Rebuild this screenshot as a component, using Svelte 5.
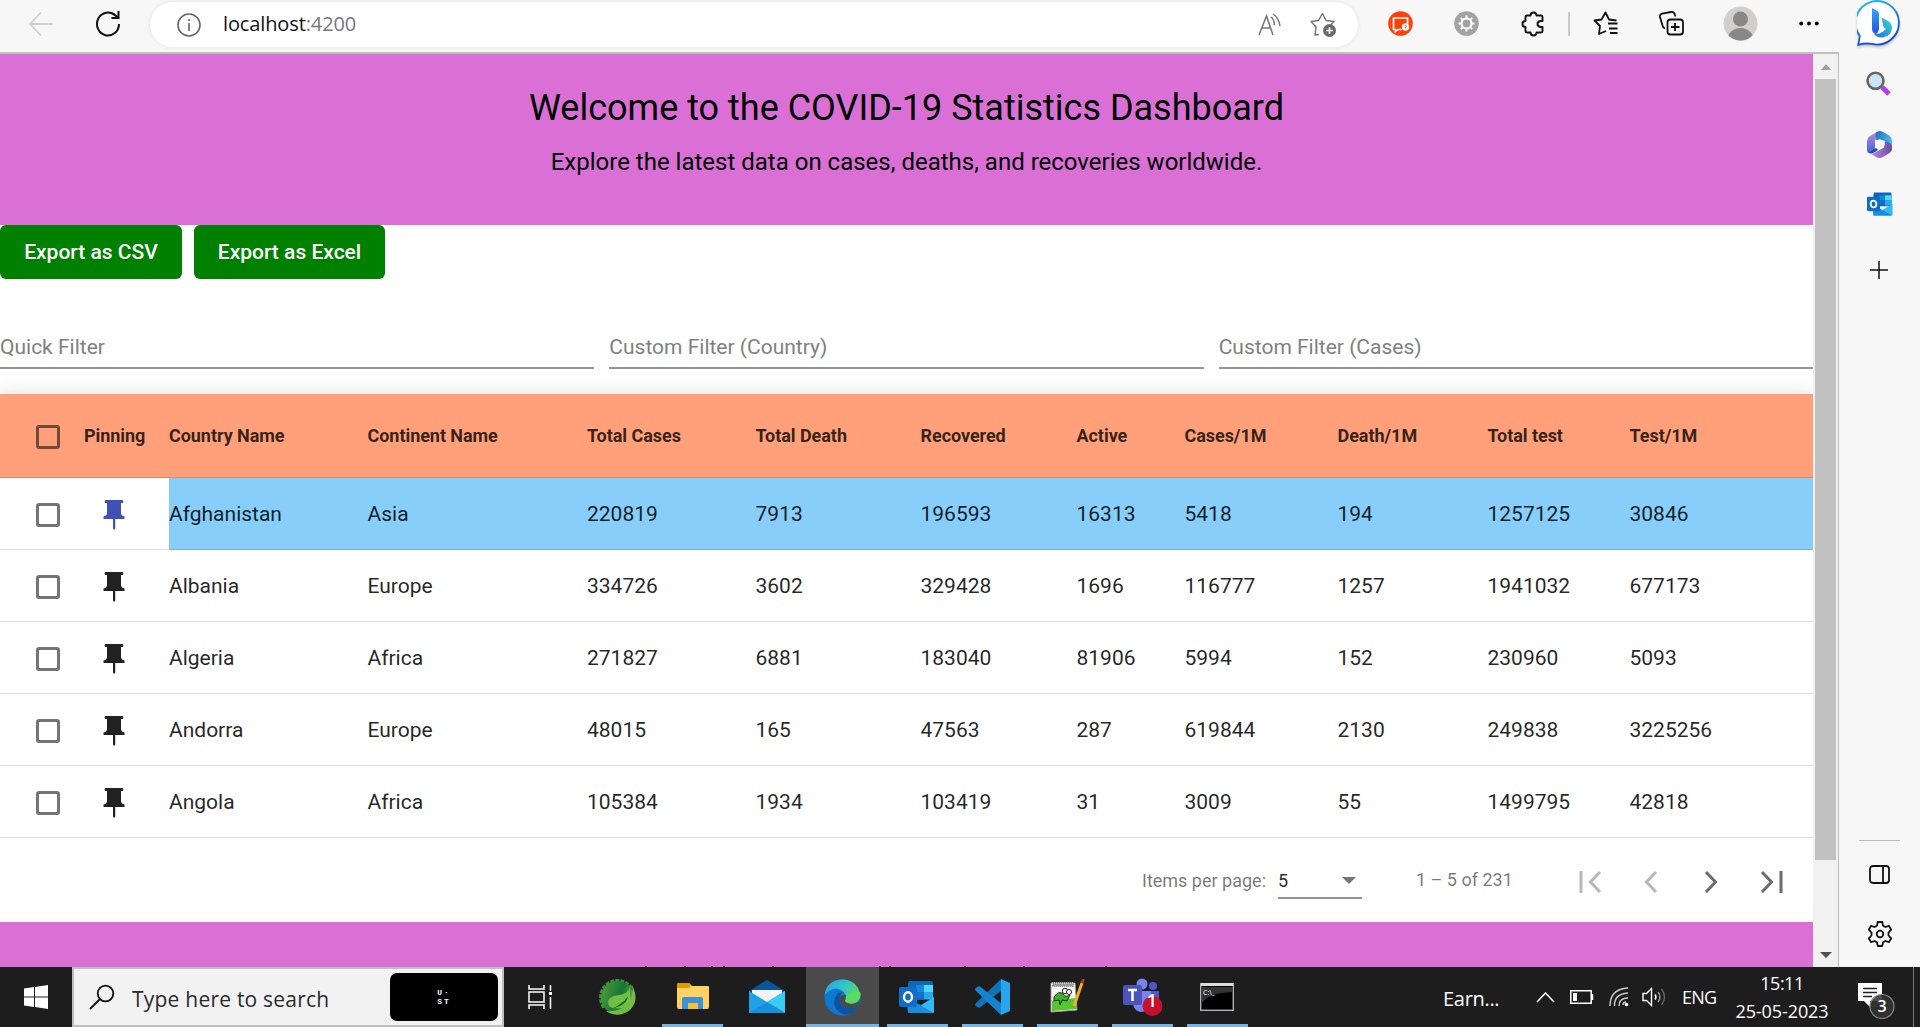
<script>
  const columns = ['Country Name', 'Continent Name', 'Total Cases', 'Total Death', 'Recovered', 'Active', 'Cases/1M', 'Death/1M', 'Total test', 'Test/1M'];
  const rows = [
    ['Afghanistan', 'Asia', 220819, 7913, 196593, 16313, 5418, 194, 1257125, 30846],
    ['Albania', 'Europe', 334726, 3602, 329428, 1696, 116777, 1257, 1941032, 677173],
    ['Algeria', 'Africa', 271827, 6881, 183040, 81906, 5994, 152, 230960, 5093],
    ['Andorra', 'Europe', 48015, 165, 47563, 287, 619844, 2130, 249838, 3225256],
    ['Angola', 'Africa', 105384, 1934, 103419, 31, 3009, 55, 1499795, 42818]
  ];
  let pinned = $state(0);
  const filters = ['Quick Filter', 'Custom Filter (Country)', 'Custom Filter (Cases)'];
  const gearTeeth = [0, 45, 90, 135, 180, 225, 270, 315];
  const springTeeth = Array.from({ length: 11 }, (_, i) => 172 + i * 17);
  const footerTicks = [645, 684, 711, 723, 772, 879, 889, 964, 1023, 1105];
</script>

{#snippet outlook(size)}
  <svg width={size} height={size} viewBox="0 0 36 36">
    <path d="M10 2h22a2 2 0 0 1 2 2v17H9V4z" fill="#1066b5" />
    <path d="M17 6h8v7h-8z" fill="#1a86d9" /><path d="M25 6h9v7h-9z" fill="#50d9ff" />
    <path d="M17 13h8v6h-8z" fill="#1272c4" /><path d="M25 13h9v7h-9z" fill="#28a8ea" />
    <path d="M8 19l14 8 13-9v15a1 1 0 0 1-1 1H9z" fill="#1490df" />
    <path d="M35 18v15l-1 1L16 23l6 3z" fill="#35b8f1" /><path d="M8 19l26 15H9z" fill="#1a8be0" />
    <rect x="0" y="8" width="18" height="20" rx="2" fill="#0f6cc9" />
    <ellipse cx="9" cy="18" rx="4" ry="4.7" fill="none" stroke="#fff" stroke-width="2.4" />
  </svg>
{/snippet}

<div class="screen">
  <div class="browser">
    <div class="window">
      <div class="toolbar">
        <div class="cell back">
          <svg width="24" height="28" viewBox="0 0 24 28" fill="none" stroke="#cfcfcf" stroke-width="1.8"><path d="M23.500 14H1M12 2.500L1 14l11 11.500" /></svg>
        </div>
        <div class="cell refresh">
          <svg width="26" height="28" viewBox="0 0 26 28" fill="none" stroke="#111" stroke-width="2"><path d="M24 14a11 11.500 0 1 1-3.600-8.500L23.500 8M23.500 1v7h-7" /></svg>
        </div>
        <div class="address">
          <svg class="info" width="24" height="24" viewBox="0 0 24 24" fill="none" stroke="#666" stroke-width="1.600"><circle cx="12" cy="12" r="11" /><path d="M12 10v8M12 6v2" /></svg>
          <span class="url">localhost<span>:4200</span></span>
          <svg class="read" width="24" height="24" viewBox="0 0 24 24" fill="none" stroke="#757575" stroke-width="1.500"><path d="M1 22L8.500 3 15 22M3.500 15h9.500M13 4q3 2 3.500 8M15 1q6 4 7 12" /></svg>
          <svg class="star" width="27" height="25" viewBox="0 0 27 25"><path d="M9 22.500L5 23l1-8-5-5.500 7.500-1L12.500 1.500l3.500 7 8 1-3 3" fill="none" stroke="#757575" stroke-width="1.500" stroke-linejoin="round" /><circle cx="19.500" cy="18.500" r="6.500" fill="#6b6b6b" /><path d="M16 18.500h7M19.500 15v7" stroke="#fff" stroke-width="1.600" /></svg>
        </div>
        <div class="cell">
          <svg width="25" height="25" viewBox="0 0 25 25"><circle cx="12.500" cy="12.500" r="12.300" fill="#ff4107" /><path d="M14 18.500h-4l-2.500 2v-2h-2V7h14v6" fill="none" stroke="#fff" stroke-width="1.700" /><circle cx="17.500" cy="16" r="3.700" fill="#fff" /><path d="M16.500 15q1-1.500 2 0l-1 1.300v1" fill="none" stroke="#ff4107" /></svg>
        </div>
        <div class="cell">
          <svg width="25" height="25" viewBox="0 0 25 25"><circle cx="12.500" cy="12.500" r="12.300" fill="#a2a2a2" /><circle cx="12.500" cy="12.500" r="5" fill="none" stroke="#fff" stroke-width="2.200" />{#each gearTeeth as a}<path d="M12.500 4.500v3" stroke="#fff" stroke-width="2" transform="rotate({a} 12.500 12.500)" />{/each}</svg>
        </div>
        <div class="cell">
          <svg width="24" height="26" viewBox="0 0 24 26" fill="none" stroke="#111" stroke-width="1.900" stroke-linejoin="round"><path d="M6 4.500h3.500Q9.500 1.500 12.500 1.500t3 3H20q1.500 0 1.500 1.500v4h-2q-3 .5-3 3t3 3h2v4q0 1.500-1.500 1.500h-4.500q0 3-3 3t-3-3H6q-1.500 0-1.500-1.500V16q-3 0-3-3t3-3V6q0-1.500 1.500-1.500z" /></svg>
        </div>
        <div class="cell"><i class="divider"></i></div>
        <div class="cell">
          <svg width="25" height="25" viewBox="0 0 25 25" fill="none" stroke="#111" stroke-width="1.800" stroke-linejoin="round"><path d="M13 20l-7 3 1-8-5.500-5.500 7-1L12.500 1.500l3.500 7 7.500 1M15 12.500h9.500M16 17.500h8.500M17 22h7.500" /></svg>
        </div>
        <div class="cell">
          <svg width="25" height="25" viewBox="0 0 25 25" fill="none" stroke="#111" stroke-width="1.800"><rect x="8.500" y="8.500" width="15.500" height="15" rx="3" /><path d="M16 12v8M12 16h8.500M6 17.500q-2-.5-2.500-3L1 6q-.5-2.500 2-3.300L12 1q3-.5 4 3l.5 1.500" /></svg>
        </div>
        <div class="cell">
          <svg width="35" height="35" viewBox="0 0 35 35"><defs><clipPath id="avatar"><circle cx="17.500" cy="17.500" r="17" /></clipPath></defs><circle cx="17.500" cy="17.500" r="17" fill="#d1cfcd" /><g clip-path="url(#avatar)" fill="#8a8785"><circle cx="17.500" cy="13" r="7.500" /><ellipse cx="17.500" cy="34" rx="13" ry="12" /></g></svg>
        </div>
        <div class="cell">
          <svg width="20" height="5" viewBox="0 0 20 5"><circle cx="2.200" cy="2.500" r="1.900" /><circle cx="10" cy="2.500" r="1.900" /><circle cx="17.800" cy="2.500" r="1.900" /></svg>
        </div>
      </div>

      <div class="viewport">
        <main class="page">
          <header>
            <h1>Welcome to the COVID-19 Statistics Dashboard</h1>
            <p>Explore the latest data on cases, deaths, and recoveries worldwide.</p>
          </header>
          <div class="exports">
            <button class="csv">Export as CSV</button>
            <button class="excel">Export as Excel</button>
          </div>
          <div class="filters">
            {#each filters as f}<div class="filter"><span>{f}</span></div>{/each}
          </div>
          <section class="grid">
            <div class="row head">
              <div class="check"><i class="box"></i></div>
              <div>Pinning</div>
              {#each columns as c}<div>{c}</div>{/each}
            </div>
            {#each rows as r, i}
              <div class="row" class:pinned={pinned === i}>
                <div class="check"><i class="box"></i></div>
                <div class="pincell">
                  <!-- svelte-ignore a11y_click_events_have_key_events, a11y_no_static_element_interactions -->
                  <svg onclick={() => (pinned = i)} width="22" height="30" viewBox="0 0 22 30"><path d="M2.500 0h17q.8 0 .8 1.500T19.500 3H18v10q0 2.500 3.500 3.500v2.500H12.200v9.500L11.200 30l-1.200-1.500V19H.5v-2.500Q4 15.500 4 13V3H2.500q-.8 0-.8-1.500T2.500 0z" fill="currentColor" /></svg>
                </div>
                {#each r as v}<div class="data">{v}</div>{/each}
              </div>
            {/each}
          </section>
          <div class="paginator">
            <span class="label">Items per page:</span>
            <div class="select"><span>5</span><i></i></div>
            <span class="range">1 – 5 of 231</span>
            <div class="nav">
              <svg class="off" viewBox="0 0 24 24"><path d="M2 1v22M21 2L11.500 12 21 22" /></svg>
              <svg class="off" viewBox="0 0 24 24"><path d="M17 2L7.500 12 17 22" /></svg>
              <svg viewBox="0 0 24 24"><path d="M7 2l9.500 10L7 22" /></svg>
              <svg viewBox="0 0 24 24"><path d="M22 1v22M3 2l9.500 10L3 22" /></svg>
            </div>
          </div>
          <footer>
            <svg width="1813" height="2" viewBox="0 0 1813 2">{#each footerTicks as x}<path d="M{x} 1.500h2" stroke="#2b1030" />{/each}</svg>
          </footer>
        </main>
        <div class="scrollbar">
          <i class="up"></i>
          <div class="thumb"></div>
          <i class="down"></i>
        </div>
      </div>
    </div>

    <aside>
      <div class="bing">
        <svg width="46" height="48" viewBox="0 0 46 48">
          <defs>
            <linearGradient id="ring" x1="0" y1="0" x2=".4" y2="1"><stop offset="0" stop-color="#24c4ee" /><stop offset="1" stop-color="#1b48d8" /></linearGradient>
            <linearGradient id="stem" x1="0" y1="0" x2="0" y2="1"><stop offset="0" stop-color="#35a9f5" /><stop offset="1" stop-color="#2152dd" /></linearGradient>
            <linearGradient id="bowl" x1="0" y1="1" x2="1" y2="0"><stop offset="0" stop-color="#2169e2" /><stop offset="1" stop-color="#34dfd0" /></linearGradient>
          </defs>
          <path d="M1.300 44.800l1.500-9A21.700 21.700 0 1 1 15 43.900q-7-1-13.700.9z" fill="#fff" stroke="url(#ring)" stroke-width="1.900" />
          <path d="M15 8l5.500 3q1.500 1 1.500 2.500V29q-1.500 6-4.500 4.500Q15 32 15 29z" fill="url(#stem)" />
          <path d="M24.500 17.500l6.500 3.500q4 2.500 4 6.500 0 8-8.500 9.800-6 1-9.500-3.300 5 .5 9-2.500l3-2.500-2.500-2z" fill="url(#bowl)" />
        </svg>
      </div>
      <div class="side s1">
        <svg width="25" height="25" viewBox="0 0 25 25"><path d="M16 16l7 7" stroke="#b33bf3" stroke-width="5" /><circle cx="9.500" cy="9.800" r="8" fill="#c8e8fa" stroke="#666" stroke-width="2.600" /></svg>
      </div>
      <div class="side s2">
        <svg width="25" height="27" viewBox="0 0 25 27">
          <defs>
            <linearGradient id="mTop" x1="0" y1="0" x2="1" y2=".6"><stop offset="0" stop-color="#2f62b8" /><stop offset="1" stop-color="#3fc4f4" /></linearGradient>
            <linearGradient id="mLeft" x1="0" y1="0" x2="0" y2="1"><stop offset="0" stop-color="#b48ae8" /><stop offset="1" stop-color="#3d63d4" /></linearGradient>
            <linearGradient id="mBase" x1="0" y1="0" x2="1" y2="0"><stop offset="0" stop-color="#b98be6" /><stop offset="1" stop-color="#6e4a9e" /></linearGradient>
          </defs>
          <path d="M10 1L3 5Q0 7 0 10v9q0 3 3 3.500 2 0 5-2V8z" fill="url(#mLeft)" />
          <path d="M8.500 9V3q0-2 4-3 2 0 4 1.200l6 3.500Q25 6.500 25 10v6l-7-6-5-1.500z" fill="url(#mTop)" />
          <path d="M25 15v3q0 2.500-2.500 4l-6.500 4q-3.500 2-7 0L3.500 22.500Q6 23 9 21l8-4.500L18 10q6 1 7 5z" fill="url(#mBase)" />
          <path d="M2 22q3 1 6-1l3-2-2-2-5 3z" fill="#2450a4" />
          <circle cx="12.700" cy="13.500" r="4.700" fill="#f7f7f7" />
        </svg>
      </div>
      <div class="side s3">{@render outlook(26)}</div>
      <div class="side s4"><svg width="18" height="18" viewBox="0 0 18 18"><path d="M9 0v18M0 9h18" stroke="#111" stroke-width="1.500" /></svg></div>
      <i class="rule"></i>
      <div class="side s5"><svg width="21" height="19" viewBox="0 0 21 19" fill="none" stroke="#111" stroke-width="1.800"><rect x="1" y="1" width="19" height="17" rx="3" /><path d="M14 1v17" /></svg></div>
      <div class="side s6">
        <svg width="26" height="26" viewBox="0 0 26 26" fill="none" stroke="#111" stroke-width="1.800" stroke-linejoin="round"><circle cx="13" cy="13" r="3.300" /><path d="M10.800 1h4.400l.9 3.700 2.300 1.300 3.600-1.100 2.200 3.800L21.500 11.500v3l2.700 2.800-2.200 3.800-3.600-1.100-2.300 1.300-.9 3.700h-4.400l-.9-3.700L7.600 20 4 21.100l-2.200-3.800 2.700-2.800v-3L1.800 8.700 4 4.900 7.600 6l2.300-1.300z" /></svg>
      </div>
    </aside>
  </div>

  <div class="taskbar">
    <div class="tile start"><svg width="24" height="24" viewBox="0 0 24 24" fill="#fff"><path d="M0 3.500l10-1.400v9.300H0zM11 1.900L24 0v11.400H11zM0 12.500h10v9.400L0 20.500zM11 12.500h13V24l-13-1.900z" /></svg></div>
    <div class="search">
      <svg width="26" height="26" viewBox="0 0 26 26" fill="none" stroke="#111" stroke-width="1.800"><circle cx="16.500" cy="9.500" r="7.800" /><path d="M11 15L1 25" /></svg>
      <span>Type here to search</span>
      <div class="ust"><b>U·</b><b>ST</b></div>
    </div>
    <div class="tile view"><svg width="24" height="24" viewBox="0 0 24 24" fill="none" stroke="#fff" stroke-width="1.500"><path d="M1 0v4h15V0M1 24v-4h15v4M1 7h15v10H1zM22.500 0v6M22.500 12v12" /><path d="M21 7h3v3h-3z" fill="#fff" stroke="none" /></svg></div>
    <div class="tile spring">
      <svg width="37" height="37" viewBox="0 0 37 37">
        <defs><linearGradient id="leafbg" x1="0" y1=".3" x2="1" y2=".6"><stop offset="0" stop-color="#4b9b38" /><stop offset=".6" stop-color="#14733a" /><stop offset="1" stop-color="#6db83f" /></linearGradient></defs>
        {#each springTeeth as a}<path d="M34 16h3v4h-3z" fill="#3c8f39" transform="rotate({a - 20} 18.500 18.500)" />{/each}
        <circle cx="18.500" cy="18.500" r="16.500" fill="url(#leafbg)" />
        <path d="M33 6q8 15-2 25-12 9-24 1 12 1 20-5 8-7 6-21z" fill="#72bd44" /><path d="M31 16q2 8-5 12-8 3-15 0-4-5 0-9 4-3 9-3 8-1 11-7z" fill="#72bd44" /><path d="M6 30q10 0 15-5 5-3 8-8-1 7-8 10-8 4-15 3z" fill="#0b6b34" />
      </svg>
    </div>
    <div class="tile app first">
      <svg width="34" height="28" viewBox="0 0 34 28"><path d="M1 2q0-2 2-2h10l3 3h16q1 0 1 1v20q0 2-2 2H3q-2 0-2-2z" fill="#ffd261" /><path d="M1 5V2q0-2 2-2h10l2 2-2 3z" fill="#dd9b00" /><path d="M6 26V16q0-2 2-2h17q2 0 2 2v10h-5v-6H12v6z" fill="#3c91d8" /><path d="M12 20h10v6H12z" fill="#f7c035" /></svg>
    </div>
    <div class="tile mail">
      <svg width="36" height="34" viewBox="0 0 36 34"><path d="M0 11L18 0l18 11v4H0z" fill="#0b559f" /><path d="M3 10h30v7L18 24 3 17z" fill="#f3f3f4" /><path d="M0 11l18 11 18-11v22H0z" fill="#20a0e6" /><path d="M36 11v22L18 22z" fill="#39caf5" /><path d="M0 33h36L18 22z" fill="#168fdc" /></svg>
    </div>
    <div class="tile edge">
      <svg width="37" height="37" viewBox="0 0 37 37">
        <defs><linearGradient id="wave" x1="0" y1=".2" x2="1" y2=".6"><stop offset="0" stop-color="#2ea5df" /><stop offset=".5" stop-color="#32c4cb" /><stop offset="1" stop-color="#62db55" /></linearGradient></defs>
        <circle cx="18.500" cy="18.500" r="18" fill="#0b79cf" />
        <path d="M.6 16Q3 .5 18.500.5 29 .5 34 9q4 9-1 14-5 3-11 .5-2-1 0-4 1-7-9-10Q6 9 .6 16z" fill="url(#wave)" />
        <path d="M13 15Q7 24 13 31q5 5 11 4.500 7-2 10-8-8 3-14 0-6-4-4-10 1-3 3-4-4-1-6 1.500z" fill="#1053a3" />
        <path d="M22 19q-2 4 1 5 6 2 10-.5L37 22l-3 5.500q-8 3-14 0-6-4-3.500-10 2-3 5.500-1z" fill="#4a4a4a" /><path d="M21.500 18q1 2-.5 4 5 4.500 13 0 4-5 2-9-4-2-14.500 5z" fill="#5dda60" />
      </svg>
    </div>
    <div class="tile app a2">{@render outlook(36)}</div>
    <div class="tile app">
      <svg width="36" height="36" viewBox="0 0 36 36"><path d="M27 0L2 24q-2 2 0 3l2 1.500q1 .5 2 0L28 11z" fill="#1172b8" /><path d="M27 36L2 12q-2-2 0-3l2-1.500q1-.5 2 0L28 25z" fill="#1683cf" /><path d="M27 0l9 4v28l-9 4z" fill="#27a5f1" /></svg>
    </div>
    <div class="tile app">
      <svg width="36" height="36" viewBox="0 0 36 36"><path d="M2 4h24l2 27L2 33z" fill="#f7f7f3" stroke="#999" /><path d="M3 4h22v4H3z" fill="#999" stroke="#fff" stroke-dasharray="1 1" /><path d="M3 22l24-3 1 11L3 32z" fill="#58c52e" /><path d="M5 18q5-7 9-3 3 4 7 1l-3 6-5-1-2 5-1-5-5 1z" fill="#49a831" stroke="#143b14" /><circle cx="16" cy="12" r="2.700" fill="#fff" stroke="#222" /><circle cx="20" cy="13" r="2.500" fill="#fff" stroke="#222" /><path d="M33 4l-8 23" stroke="#f3ae22" stroke-width="3" /><path d="M34.500 0L33 4" stroke="#a63b35" stroke-width="3" /></svg>
    </div>
    <div class="tile app teams">
      <svg width="40" height="38" viewBox="0 0 40 38"><circle cx="19" cy="6" r="5.500" fill="#7b83eb" /><circle cx="30" cy="8" r="4" fill="#5059c9" /><path d="M25 13h11v10q-2 6-8 5z" fill="#5059c9" /><path d="M10 13h18v12q-1 9-10 9-7-1-8-8z" fill="#7b83eb" /><rect x="0" y="7" width="19" height="20" rx="2" fill="#4b53bc" /><path d="M5 12h9M9.500 12v11" stroke="#fff" stroke-width="2.500" /><circle cx="29.500" cy="28" r="10" fill="#c8102e" /></svg>
      <b>1</b>
    </div>
    <div class="tile app">
      <svg width="34" height="28" viewBox="0 0 34 28"><rect x=".7" y=".7" width="32.600" height="26.600" fill="#000" stroke="#adb2b8" stroke-width="1.400" /><path d="M1 0h32v3H1z" fill="#d7dce1" /><path d="M2 4h30v5Q8 10 2 20z" fill="#333" /><text x="3" y="12" fill="#fff" font-size="7">C:\_</text></svg>
    </div>
    <div class="tray">
      <span class="earn">Earn...</span>
      <svg class="chev" width="19" height="11" viewBox="0 0 19 11" fill="none" stroke="#fff" stroke-width="1.500"><path d="M1 10l8.500-9L18 10" /></svg>
      <svg class="batt" width="24" height="14" viewBox="0 0 24 14"><path d="M.8.8h20.400v12.400H.8zM22.500 4v6" fill="none" stroke="#fff" stroke-width="1.500" /><path d="M3 3h4v8H3z" fill="#fff" /></svg>
      <svg class="wifi" width="20" height="20" viewBox="0 0 20 20" fill="none" stroke="#ccc" stroke-width="1.400"><path d="M1 19Q1 2 19 1M5.500 19Q5 7 19 6M10 19Q10 11 19 11" /><path d="M14 18q0-3 3-3" /><circle cx="17.500" cy="17.500" r="1.800" fill="#fff" stroke="none" /></svg>
      <svg class="vol" width="24" height="20" viewBox="0 0 24 20" fill="none" stroke="#fff" stroke-width="1.400"><path d="M1 6.500h3.500L9.500 1.500v17l-5-5H1z" /><path d="M13 7.500q2 2.500 0 5" /><path d="M16 5q4 5 0 10" stroke="#999" /><path d="M19.500 2q6 8 0 16" stroke="#666" /></svg>
      <span class="eng">ENG</span>
      <div class="clock"><span class="time">15:11</span><span class="date">25-05-2023</span></div>
      <div class="notice">
        <svg width="37" height="38" viewBox="0 0 37 38"><path d="M0 2h24v18H12v6l-6-6H0z" fill="#fff" /><path d="M5 7.500h14M5 11.500h14M5 15.500h9" stroke="#222" stroke-width="1.300" /><circle cx="24" cy="25.500" r="12" fill="#333" fill-opacity=".88" stroke="#888" stroke-width="1.200" /></svg>
        <b>3</b>
      </div>
      <i class="peek"></i>
    </div>
  </div>
</div>

<style>
  :global(body) { margin: 0; overflow: hidden; background: #fff; }
  .screen { width: 1920px; height: 1027px; display: grid; grid-template-rows: 967px 60px; overflow: hidden; font-family: Roboto, sans-serif; }
  .screen :global(svg) { display: block; flex: none; }
  .browser { display: grid; grid-template-columns: 1839px 81px; background: #f7f7f7; min-height: 0; }
  .window { display: grid; grid-template-rows: 52px 915px; grid-template-columns: 1839px; min-width: 0; }
  .toolbar { display: grid; grid-template-columns: 82px 52px 1241px 50px 82px 52px 20px 52px 80px 58px 80px; align-items: center; padding-bottom: 6px; height: 46px; }
  .cell { display: flex; justify-content: center; align-items: center; }
  .divider { width: 2px; height: 24px; background: #ccc; }
  .address { display: flex; align-items: center; height: 45px; margin: 2px 17px 0 16px; padding-left: 27px; border-radius: 23px; background: #fff; box-shadow: 0 0 5px rgba(0, 0, 0, .09); }
  .url { margin-left: 22px; padding-bottom: 2px; font: 20px 'Open Sans', sans-serif; letter-spacing: -.12px; color: #111; }
  .url span { color: #777; }
  .read { margin-left: auto; }
  .star { margin: 0 21px 0 28px; }
  .viewport { border-top: 2px solid #c0c0c0; border-right: 1px solid #bdbdbd; display: grid; grid-template-columns: 1813px 25px; overflow: hidden; }
  .page { height: 913px; overflow: hidden; background: #fff; color: rgba(0, 0, 0, .87); }
  header { height: 171px; box-sizing: border-box; padding-top: 30px; background: #da70d6; color: #000; text-align: center; }
  h1 { margin: 0; font-size: 36px; line-height: 48px; font-weight: 400; }
  p { margin: 12px 0 0; font-size: 24px; line-height: 36px; }
  .exports { display: flex; gap: 12px; height: 54px; }
  button { padding: 0; border: 0; border-radius: 6px; background: #008000; color: #fff; font: 500 21px Roboto, sans-serif; }
  .csv { width: 182px; }
  .excel { width: 191px; }
  .filters { display: grid; grid-template-columns: repeat(3, 1fr); gap: 15px; padding-top: 41px; height: 74px; }
  .filter { padding-top: 4px; border-bottom: 2px solid #949494; font-size: 21px; line-height: 46px; height: 43px; color: #808080; }
  .grid { position: relative; box-shadow: 0 7px 8px -4px rgba(0, 0, 0, .2), 0 12px 15px 1px rgba(0, 0, 0, .14), 0 4px 21px 3px rgba(0, 0, 0, .12); }
  .row { display: grid; grid-template-columns: 84px 85px 198.500px 219.500px 168.500px 165px 156px 108px 153px 150px 142px 1fr; height: 72px; box-sizing: border-box; background: #fff; font-size: 21px; }
  .row > div { display: flex; align-items: center; border-bottom: 1px solid rgba(0, 0, 0, .12); white-space: nowrap; }
  .head { height: 84px; background: #ffa07a; font-size: 18px; font-weight: 700; letter-spacing: -.05px; color: rgba(0, 0, 0, .8); }
  .check { padding-left: 36px; }
  .box { width: 18px; height: 18px; margin-top: 3px; border: 3px solid rgba(0, 0, 0, .54); border-radius: 3px; }
  .row > .pincell { padding: 2px 0 0 19px; color: #212121; }
  .pinned > .pincell { color: #3f51b5; }
  .pinned .data { background: #87cefa; }
  .paginator { position: relative; display: flex; align-items: center; box-sizing: border-box; height: 84px; padding-left: 1142px; background: #fff; color: rgba(0, 0, 0, .54); font-size: 18px; }
  .label { width: 136px; padding-top: 1px; white-space: nowrap; }
  .select { display: flex; justify-content: space-between; align-items: center; box-sizing: border-box; width: 84px; height: 38px; padding-right: 6px; border-bottom: 2px solid #949494; color: rgba(0, 0, 0, .87); padding-top: 3px; }
  .select i { border: 7px solid transparent; border-top-color: #757575; border-bottom: 0; }
  .range { width: 163px; margin-left: 54px; padding-bottom: 2px; }
  .nav { display: flex; gap: 36px; padding-top: 3px; }
  .nav svg { width: 24px; height: 24px; fill: none; stroke: #6b6b6b; stroke-width: 3; }
  .nav .off { stroke: #b8b8b8; }
  footer { display: flex; align-items: flex-end; height: 45px; background: #da70d6; position: relative; }
  .scrollbar { display: flex; flex-direction: column; align-items: center; background: #f1f1f1; }
  .up { margin-top: 10px; border: 5.500px solid transparent; border-top: 0; border-bottom: 6px solid #a0a0a0; }
  .thumb { width: 21px; height: 781px; margin-top: 9px; background: #c1c1c1; }
  .down { margin-top: 92px; border: 6px solid transparent; border-bottom: 0; border-top: 6px solid #505050; }
  aside { display: flex; flex-direction: column; align-items: center; }
  .bing { height: 48px; filter: drop-shadow(0 2px 1px rgba(0, 0, 0, .2)); }
  .side { height: 60px; display: flex; align-items: center; }
  .s1 { margin-top: 5px; margin-left: -3px; }
  .s2 { margin-top: 1px; }
  .s4 { margin-top: 6px; margin-left: -2px; }
  .rule { width: 41px; height: 1px; margin-top: 540px; background: #bbb; }
  .s5 { margin-top: 3px; }
  .taskbar { display: flex; background: #1d1d1d; color: #fff; font-family: 'Open Sans', sans-serif; }
  .tile { display: flex; justify-content: center; align-items: center; box-sizing: border-box; flex: none; height: 60px; position: relative; }
  .start { width: 72px; }
  .search { display: flex; align-items: center; box-sizing: border-box; width: 432px; border: 2px solid #bfbfbf; background: #f2f2f2; padding: 0 4px 0 15px; color: #2b2b2b; }
  .search span { margin: 4px 0 0 17px; font-size: 21px; letter-spacing: .22px; }
  .ust { display: flex; flex-direction: column; align-items: center; justify-content: center; width: 108px; height: 48px; margin-left: auto; border-radius: 7px; background: #000; color: #fff; font: 8px/9px 'Liberation Mono', monospace; letter-spacing: 2px; }
  .view { width: 73px; padding-right: 1px; }
  .spring { width: 80px; }
  .app { width: 61px; margin-right: 14px; padding-right: 2px; border-bottom: 3px solid #70b5ec; border-top: 3px solid transparent; }
  .first { margin-left: 5px; padding-right: 0; }
  .mail { width: 69px; padding-right: 9px; }
  .edge { width: 73px; background: #4a4a4a; border-bottom: 3px solid #70b5ec; border-top: 3px solid #4a4a4a; }
  .a2 { margin-left: 8px; }
  .teams b { position: absolute; left: 30px; top: 15px; width: 20px; text-align: center; font-size: 18px; font-weight: 600; left: 29px; top: 18px; }
  .teams b { left: 29px; }
  .teams { padding-right: 0; }
  .teams b { left: 30px; }
  .tray { display: flex; align-items: center; margin-left: 181px; flex: 1; }
  .earn { width: 93px; font-size: 20px; letter-spacing: -.3px; padding-top: 2px; }
  .chev { margin-right: 15px; }
  .batt { margin-right: 15px; }
  .wifi { margin-right: 13px; }
  .vol { margin-right: 16px; }
  .eng { width: 50px; font-size: 18px; letter-spacing: -.8px; }
  .clock { display: flex; flex-direction: column; align-items: center; width: 100px; font-size: 18px; line-height: 28px; letter-spacing: -.1px; white-space: nowrap; }
  .time { letter-spacing: -.5px; }
  .notice { position: relative; margin: 6px 0 0 26px; }
  .notice b { position: absolute; left: 15px; top: 14px; width: 18px; text-align: center; font-size: 16px; line-height: 22px; font-weight: 600; }
  .peek { width: 1px; height: 60px; margin-left: auto; margin-right: 6px; background: #777; }
</style>
